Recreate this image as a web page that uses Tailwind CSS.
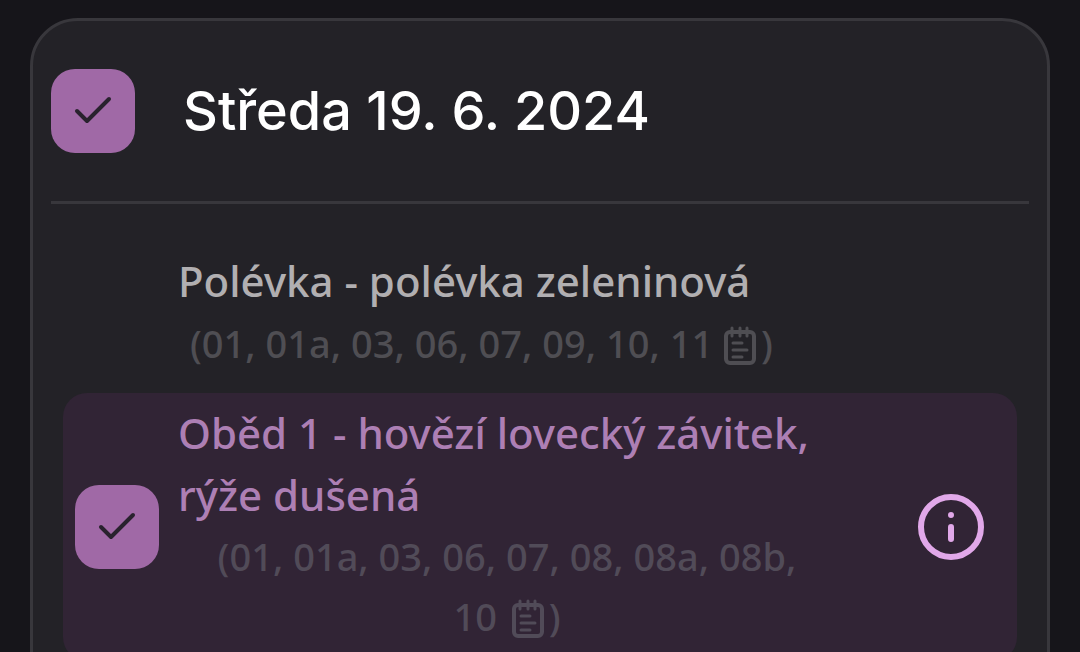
<!DOCTYPE html>
<html lang="cs">
  <head>
    <meta charset="UTF-8" />
    <meta name="viewport" content="width=device-width, initial-scale=1.0" />
    <title>Jídelníček</title>
    <script src="https://cdn.jsdelivr.net/npm/@tailwindcss/browser@4"></script>
  </head>
  <body class="h-screen overflow-hidden bg-[#16151a] font-['Noto_Sans','Open_Sans',sans-serif] font-medium">
    <main class="px-[30px] pt-[18px]">
      <section class="rounded-[48px] border-3 border-[#38373c] bg-[#232227] px-[18px] pb-12">
        <header class="flex items-center gap-12 border-b-3 border-[#38373c] py-12">
          <span class="grid shrink-0 place-items-center">
            <input
              id="day"
              type="checkbox"
              checked
              class="col-start-1 row-start-1 size-[84px] appearance-none rounded-3xl bg-[#a069a6]"
            />
            <svg class="pointer-events-none col-start-1 row-start-1 size-12" viewBox="0 0 48 48" fill="none" stroke="#29222e" stroke-width="4" stroke-linecap="round" stroke-linejoin="round">
              <path d="M8 24 L18 34 L40 12" />
            </svg>
          </span>
          <h1 class="font-['Inter',sans-serif] text-[54px] leading-[60px] text-white">
            <label for="day">Středa 19. 6. 2024</label>
          </h1>
        </header>

        <ul class="px-3 pt-[46px]">
          <li class="flex pb-[19px] pl-[115px]">
            <div>
              <p class="text-[42px] leading-[62px] text-[#b1afb1]">Polévka - polévka zeleninová</p>
              <p class="pl-3 text-[38px] leading-[62px] text-[#4f4e53]">
                (01, 01a, 03, 06, 07, 09, 10,
                <span class="whitespace-nowrap">11
                <svg class="mr-0.5 inline h-[42px] w-9 align-[-9px]" viewBox="0 0 36 42" fill="none" stroke="currentColor" stroke-width="4" stroke-linecap="round">
                  <rect x="3" y="7" width="28" height="31" rx="4" />
                  <path stroke-width="3" d="M9 3v8M17 3v8M24 3v8M10 18h9M10 25h14M10 32h9" />
                </svg>)</span>
              </p>
            </div>
          </li>

          <li class="flex items-center rounded-3xl bg-[#312435] py-[9px] pr-[33px] pl-3">
            <span class="grid shrink-0 place-items-center">
              <input
                id="lunch-1"
                type="checkbox"
                checked
                class="col-start-1 row-start-1 size-[84px] appearance-none rounded-3xl bg-[#a069a6]"
              />
              <svg class="pointer-events-none col-start-1 row-start-1 size-12" viewBox="0 0 48 48" fill="none" stroke="#29222e" stroke-width="4" stroke-linecap="round" stroke-linejoin="round">
                <path d="M8 24 L18 34 L40 12" />
              </svg>
            </span>
            <label for="lunch-1" class="ml-[19px] flex-1 pb-1.5">
              <span class="block text-[42px] leading-[62px] text-[#ad7fb4]">Oběd 1 - hovězí lovecký závitek, rýže dušená</span>
              <span class="block text-center text-[38px] leading-[60px] text-[#514b58]">
                (01, 01a, 03, 06, 07, 08, 08a, 08b,
                <span class="whitespace-nowrap">10
                <svg class="mr-0.5 ml-1 inline h-[42px] w-9 align-[-9px]" viewBox="0 0 36 42" fill="none" stroke="currentColor" stroke-width="4" stroke-linecap="round">
                  <rect x="3" y="7" width="28" height="31" rx="4" />
                  <path stroke-width="3" d="M9 3v8M17 3v8M24 3v8M10 18h9M10 25h14M10 32h9" />
                </svg>)</span>
              </span>
            </label>
            <button type="button" aria-label="Informace" class="ml-[82px] shrink-0 text-[#e1a8e9]">
              <svg class="size-[66px]" viewBox="0 0 66 66" fill="none" stroke="currentColor" stroke-width="6" stroke-linecap="round">
                <circle cx="33" cy="33" r="30" />
                <path d="M33 33v12M33 21v.1" />
              </svg>
            </button>
          </li>
        </ul>
      </section>
    </main>
  </body>
</html>
